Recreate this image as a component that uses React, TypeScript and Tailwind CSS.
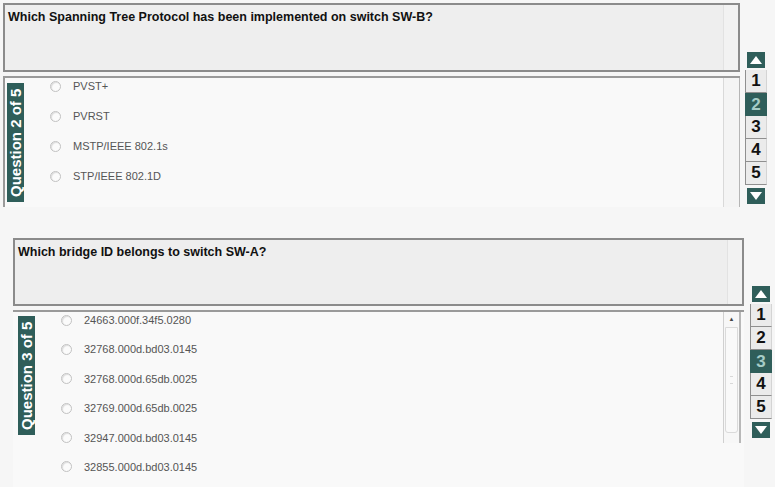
import React from "react";

const TEAL = "bg-[#2f5e5a]";

function Radio() {
  return (
    <span className="block w-[11px] h-[11px] rounded-full border border-[#c2c2c2] bg-[#fbfbfb] shadow-[inset_1px_1px_1px_rgba(0,0,0,0.12)] shrink-0" />
  );
}

function SideLabel({ text, className }: { text: string; className: string }) {
  return (
    <div
      className={`${TEAL} ${className} w-[17px] h-[119px] flex items-center justify-center text-white font-bold text-[15px] leading-none [writing-mode:vertical-rl] rotate-180 whitespace-nowrap shrink-0`}
    >
      {text}
    </div>
  );
}

function QuestionBox({ text, h }: { text: string; h: string }) {
  return (
    <div className={`${h} border-2 border-[#8b8b8b] bg-[#eeeeee] flex`}>
      <div className="flex-1 pl-[3px] pt-[5px] text-[12.5px] leading-[14px] font-bold text-[#111]">{text}</div>
      <div className="w-[15px] border-l border-[#e2e2e2] bg-[#f2f2f2]" />
    </div>
  );
}

function Nav({ active, className }: { active: number; className: string }) {
  return (
    <div className={`flex flex-col items-center ${className}`}>
      <div className={`${TEAL} w-[18px] h-[16px] flex items-center justify-center`}>
        <svg width="12" height="8" viewBox="0 0 12 8">
          <polygon points="6,0 12,8 0,8" fill="#ffffff" />
        </svg>
      </div>
      <div className="mt-[2px] flex flex-col">
        {[1, 2, 3, 4, 5].map((n) =>
          n === active ? (
            <div
              key={n}
              className={`${TEAL} w-[22px] h-[23px] flex items-center justify-center text-[17px] font-bold text-[#a6ccc7]`}
            >
              {n}
            </div>
          ) : (
            <div
              key={n}
              className="w-[22px] h-[23px] flex items-center justify-center text-[17px] font-bold text-[#111] bg-[#ebebeb] border-l border-b border-[#8f8f8f] border-r-[#d4d4d4] border-r"
            >
              {n}
            </div>
          )
        )}
      </div>
      <div className={`${TEAL} mt-[3px] w-[18px] h-[16px] flex items-center justify-center`}>
        <svg width="12" height="8" viewBox="0 0 12 8">
          <polygon points="0,0 12,0 6,8" fill="#ffffff" />
        </svg>
      </div>
    </div>
  );
}

function Options({ items, rowH, gap, textGap }: { items: string[]; rowH: string; gap: string; textGap: string }) {
  return (
    <div className={`${gap} pt-[1px] flex flex-col`}>
      {items.map((t) => (
        <div key={t} className={`${rowH} flex items-start ${textGap}`}>
          <div className="h-[14px] flex items-center">
            <Radio />
          </div>
          <span className="text-[11px] leading-[14px] text-[#555555]">{t}</span>
        </div>
      ))}
    </div>
  );
}

export default function App() {
  return (
    <div className="w-[775px] h-[487px] overflow-hidden bg-[#f6f6f6] font-['Liberation_Sans',Arial,sans-serif]">
      {/* Question 2 */}
      <div className="flex">
        <div className="ml-[3px] mt-[3px] w-[737px]">
          <QuestionBox h="h-[69px]" text="Which Spanning Tree Protocol has been implemented on switch SW-B?" />
          <div className="mt-[4px] h-[131px] border-l-2 border-t-2 border-[#9a9a9a] bg-[#f9f9f9] flex">
            <SideLabel text="Question 2 of 5" className="ml-[2px] mt-[5px]" />
            <Options
              items={["PVST+", "PVRST", "MSTP/IEEE 802.1s", "STP/IEEE 802.1D"]}
              rowH="h-[30px]"
              gap="ml-[26px]"
              textGap="gap-[12px]"
            />
            <div className="flex-1" />
            <div className="w-[17px] border-l border-[#d9d9d9] border-r border-r-[#b5b5b5] bg-[#f4f4f4]" />
          </div>
        </div>
        <Nav active={2} className="ml-[5px] mt-[52px]" />
      </div>

      {/* Question 3 */}
      <div className="flex mt-[31px]">
        <div className="ml-[13px] w-[731px]">
          <QuestionBox h="h-[68px]" text="Which bridge ID belongs to switch SW-A?" />
          <div className="mt-[4px] border-t-2 border-[#9a9a9a] bg-[#f9f9f9] flex items-start">
            <SideLabel text="Question 3 of 5" className="ml-[5px] mt-[4px]" />
            <Options
              items={[
                "24663.000f.34f5.0280",
                "32768.000d.bd03.0145",
                "32768.000d.65db.0025",
                "32769.000d.65db.0025",
                "32947.000d.bd03.0145",
                "32855.000d.bd03.0145",
              ]}
              rowH="h-[29.4px]"
              gap="ml-[26px]"
              textGap="gap-[12px]"
            />
            <div className="flex-1" />
            <div className="mr-[3px] w-[18px] h-[131px] border-l border-[#d0d0d0] border-r-2 border-r-[#b8b8b8] bg-[#f7f7f7] flex flex-col items-center">
              <div className="h-[14px] w-full flex items-center justify-center text-[6px] text-[#444]">▲</div>
              <div className="mt-[1px] w-[13px] h-[106px] border border-[#dadada] rounded-b-[3px] bg-[#f9f9f9] flex items-center justify-center">
                <div className="w-[3px] h-[8px] border-y border-[#d8d8d8]" />
              </div>
            </div>
          </div>
        </div>
        <Nav active={3} className="ml-[6px] mt-[48px]" />
      </div>
    </div>
  );
}
